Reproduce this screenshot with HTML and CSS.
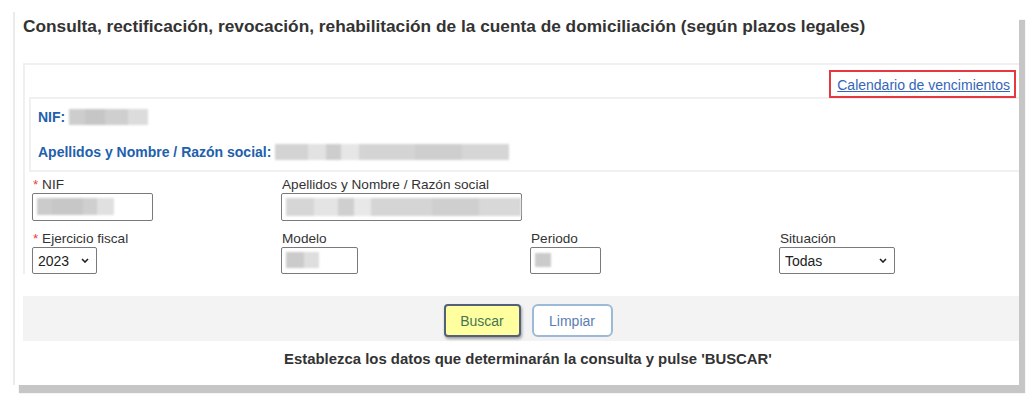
FILE: index.html
```html
<!DOCTYPE html>
<html lang="es">
<head>
<meta charset="utf-8">
<title>Consulta domiciliación</title>
<link rel="stylesheet" href="styles.css">
</head>
<body>
<div class="card">
  <h1 class="title">Consulta, rectificación, revocación, rehabilitación de la cuenta de domiciliación (según plazos legales)</h1>
  <div class="panel">
    <div class="panel-top">
      <div class="linkrow"><a class="cal-link" href="#">Calendario de vencimientos</a></div>
      <div class="subpanel">
        <div class="info-row">NIF: <span class="blur blur-nif"></span></div>
        <div class="info-row">Apellidos y Nombre / Razón social: <span class="blur blur-name"></span></div>
      </div>
      <div class="form">
        <div class="field">
          <div class="label"><span class="req">*</span> NIF</div>
          <div class="input w-nif"><span class="blur blur-in-nif"></span></div>
        </div>
        <div class="field span3">
          <div class="label">Apellidos y Nombre / Razón social</div>
          <div class="input w-name"><span class="blur blur-in-name"></span></div>
        </div>
        <div class="field row2">
          <div class="label"><span class="req">*</span> Ejercicio fiscal</div>
          <div class="select w-year"><span>2023</span><svg class="chev" width="8" height="5" viewBox="0 0 8 5"><path d="M1 1l3 3 3-3" fill="none" stroke="#222" stroke-width="1.6"/></svg></div>
        </div>
        <div class="field row2">
          <div class="label">Modelo</div>
          <div class="input small w-modelo"><span class="blur blur-modelo"></span></div>
        </div>
        <div class="field row2">
          <div class="label">Periodo</div>
          <div class="input small w-periodo"><span class="blur blur-periodo"></span></div>
        </div>
        <div class="field row2">
          <div class="label">Situación</div>
          <div class="select w-sit"><span>Todas</span><svg class="chev" width="8" height="5" viewBox="0 0 8 5"><path d="M1 1l3 3 3-3" fill="none" stroke="#222" stroke-width="1.6"/></svg></div>
        </div>
      </div>
    </div>
    <div class="btnbar">
      <button class="btn btn-buscar">Buscar</button>
      <button class="btn btn-limpiar">Limpiar</button>
    </div>
    <p class="hint">Establezca los datos que determinarán la consulta y pulse 'BUSCAR'</p>
  </div>
</div>
</body>
</html>
```
FILE: styles.css
```css
html, body {
  margin: 0;
  padding: 0;
  background: #fff;
}
body {
  font-family: "Liberation Sans", Arial, sans-serif;
  color: #333;
  padding-bottom: 15px;
}
.card {
  box-sizing: border-box;
  margin: 12px 0 0 13px;
  width: 1006px;
  height: 373px;
  background: #fff;
  border-left: 2px solid #ebebeb;
  padding-left: 8px;
  box-shadow: 6px 8px 1px #c6c6c6;
}
.title {
  margin: 0;
  padding-top: 3px;
  font-size: 17.3px;
  line-height: 22px;
  font-weight: bold;
  color: #333;
  white-space: nowrap;
}
.panel {
  margin-top: 26px;
  border-top: 2px solid #f0f0f0;
}
.panel-top {
  border-left: 2px solid #f0f0f0;
}
.linkrow {
  height: 32px;
  box-sizing: border-box;
  padding: 5px 3px 0 0;
  display: flex;
  justify-content: flex-end;
}
.cal-link {
  display: block;
  height: 28px;
  box-sizing: border-box;
  border: 2px solid #e5393f;
  padding: 3px 4px 0 6px;
  font-size: 14px;
  line-height: 21px;
  color: #3565b8;
  text-decoration: underline;
}
.subpanel {
  margin-left: 4px;
  border-top: 2px solid #f0f0f0;
  border-left: 2px solid #f0f0f0;
  border-bottom: 2px solid #f0f0f0;
  padding: 1px 0 0 7px;
  height: 70px;
  box-sizing: content-box;
}
.info-row {
  font-size: 14px;
  line-height: 35px;
  font-weight: bold;
  color: #2160ad;
  white-space: nowrap;
}
.blur {
  display: inline-block;
  vertical-align: middle;
  filter: blur(1px);
}
.blur-nif {
  width: 79px;
  height: 16px;
  margin-top: -3px;
  background: linear-gradient(90deg, #cdcdcd 0 20%, #c6c6c6 20% 45%, #cfcfcf 45% 75%, #dcdcdc 75% 100%);
}
.blur-name {
  width: 234px;
  height: 16px;
  margin-top: -3px;
  background: linear-gradient(90deg, #d3d3d3 0 14%, #e2e2e2 14% 22%, #cdcdcd 22% 28%, #e6e6e6 28% 36%, #d4d4d4 36% 60%, #cecece 60% 80%, #d6d6d6 80% 100%);
}
.form {
  padding: 4px 0 0 7px;
  display: grid;
  grid-template-columns: 249px 249px 249px 249px;
  row-gap: 9px;
}
.span3 {
  grid-column: span 3;
}
.label {
  font-size: 13.6px;
  line-height: 17px;
  padding-left: 1px;
  color: #333;
  white-space: nowrap;
}
.req {
  color: #e0423f;
}
.input {
  box-sizing: border-box;
  height: 28px;
  border: 1px solid #7a7a7a;
  border-radius: 2px;
  background: #fff;
  padding: 4px 0 0 4px;
}
.input.small {
  height: 27px;
}
.w-nif { width: 121px; }
.w-name { width: 241px; }
.w-modelo { width: 77px; }
.w-periodo { width: 71px; }
.blur-in-nif {
  width: 77px;
  height: 17px;
  display: block;
  background: linear-gradient(90deg, #cbcbcb 0 20%, #c7c7c7 20% 60%, #cfcfcf 60% 78%, #e0e0e0 78% 100%);
}
.blur-in-name {
  width: 235px;
  height: 18px;
  display: block;
  background: linear-gradient(90deg, #d6d6d6 0 12%, #e4e4e4 12% 22%, #cfcfcf 22% 29%, #e8e8e8 29% 36%, #d5d5d5 36% 62%, #cfcfcf 62% 82%, #d8d8d8 82% 100%);
}
.blur-modelo {
  width: 33px;
  height: 16px;
  display: block;
  background: linear-gradient(90deg, #cbcbcb 0 55%, #dedede 55% 100%);
}
.blur-periodo {
  width: 16px;
  height: 14px;
  display: block;
  margin-top: 1px;
  background: #cbcbcb;
}
.select {
  box-sizing: border-box;
  height: 27px;
  border: 1px solid #7a7a7a;
  border-radius: 2px;
  background: #fff;
  display: flex;
  align-items: center;
  justify-content: space-between;
  padding: 0 7px 0 5px;
  font-size: 14px;
  color: #222;
}
.w-year { width: 65px; }
.w-sit { width: 116px; }
.chev {
  display: block;
}
.btnbar {
  margin-top: 22px;
  height: 45px;
  box-sizing: border-box;
  background: #f3f3f3;
  padding: 8px 0 0 14px;
  display: flex;
  justify-content: center;
  gap: 11px;
}
.btn {
  height: 33px;
  box-sizing: border-box;
  font-family: "Liberation Sans", Arial, sans-serif;
  font-size: 14px;
  padding: 0;
  cursor: pointer;
}
.btn-buscar {
  width: 77px;
  background: #ffffa0;
  border: 2px solid #52607a;
  border-radius: 4px;
  color: #457652;
  box-shadow: 1px 2px 3px rgba(0, 0, 0, 0.35);
}
.btn-limpiar {
  width: 81px;
  background: #fff;
  border: 2px solid #9cbad8;
  border-radius: 6px;
  color: #5b7eb2;
}
.hint {
  margin: 8px 0 0;
  padding-left: 14px;
  text-align: center;
  font-size: 14.9px;
  line-height: 20px;
  font-weight: bold;
  color: #333;
}
```
